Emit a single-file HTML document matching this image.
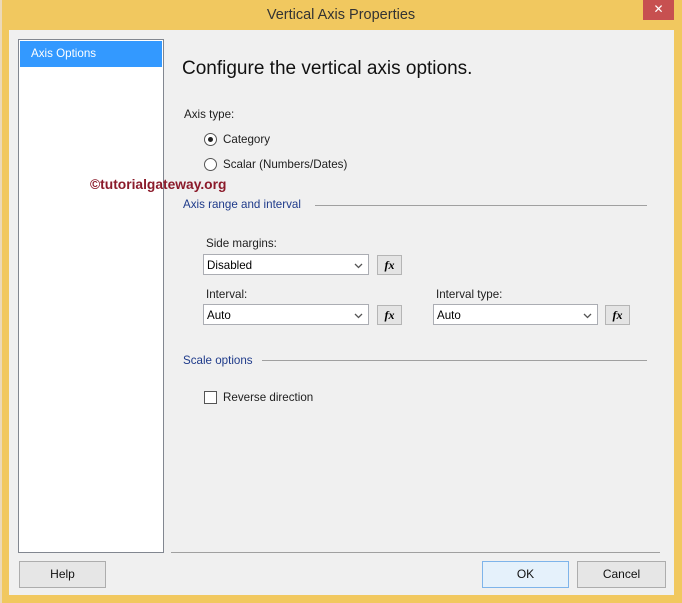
<!DOCTYPE html>
<html><head><style>
body{margin:0;width:682px;height:603px;overflow:hidden;background:#f1c85f;font-family:"Liberation Sans",sans-serif;position:relative}
.a{position:absolute}
.t{font-size:11.6px;color:#1e1e1e;white-space:nowrap}
.combo{position:absolute;height:21px;background:#fff;border:1px solid #abadb3;box-sizing:border-box;font-size:11.6px;line-height:21px;padding-left:3px;color:#000}
.combo svg{position:absolute;right:5px;top:8px}
.fx{position:absolute;width:25px;height:20px;background:#e4e4e4;border:1px solid #b5b5b5;box-sizing:border-box;font:italic bold 12px "Liberation Serif",serif;text-align:center;line-height:18px}
.btn{position:absolute;height:27px;background:#e6e6e6;border:1px solid #adadad;box-sizing:border-box;font-size:12px;text-align:center;line-height:25px;color:#111}
.rad{position:absolute;width:11px;height:11px;border:1px solid #555;border-radius:50%;background:#fff}
.hl{position:absolute;height:1px;background:#a0a0a0}
</style></head><body>
<div class="a" style="left:0;top:0;width:2px;height:603px;background:#ecd9b8"></div>
<div class="a t" style="left:0;right:0;top:7px;text-align:center;font-size:14.5px;color:#333">Vertical Axis Properties</div>
<div class="a" style="left:643px;top:0;width:31px;height:20px;background:#c75050;color:#fff;font-size:12px;text-align:center;line-height:19px">✕</div>
<div class="a" style="left:9px;top:30px;width:665px;height:565px;background:#f0f0f0"></div>
<div class="a" style="left:18px;top:39px;width:144px;height:512px;background:#fff;border:1px solid #828790"></div>
<div class="a" style="left:20px;top:41px;width:142px;height:26px;background:#3399ff"></div>
<div class="a t" style="left:31px;top:47px;color:#fff">Axis Options</div>
<div class="a t" style="left:182px;top:58px;font-size:19px;color:#111">Configure the vertical axis options.</div>
<div class="a t" style="left:184px;top:108px">Axis type:</div>
<div class="rad" style="left:204px;top:133px"><div class="a" style="left:3px;top:3px;width:5px;height:5px;border-radius:50%;background:#222"></div></div>
<div class="a t" style="left:223px;top:133px">Category</div>
<div class="rad" style="left:204px;top:158px"></div>
<div class="a t" style="left:223px;top:158px">Scalar (Numbers/Dates)</div>
<div class="a t" style="left:90px;top:177px;font-weight:bold;font-size:13.8px;color:#8b1a2a">©tutorialgateway.org</div>
<div class="a t" style="left:183px;top:198px;color:#1e3a8a">Axis range and interval</div>
<div class="hl" style="left:315px;top:205px;width:332px"></div>
<div class="a t" style="left:206px;top:237px">Side margins:</div>
<div class="combo" style="left:203px;top:254px;width:166px">Disabled<svg width="9" height="6"><path d="M1 1L4.5 4.5 8 1" stroke="#555" fill="none" stroke-width="1.3"/></svg></div>
<div class="fx" style="left:377px;top:255px">fx</div>
<div class="a t" style="left:206px;top:288px">Interval:</div>
<div class="combo" style="left:203px;top:304px;width:166px">Auto<svg width="9" height="6"><path d="M1 1L4.5 4.5 8 1" stroke="#555" fill="none" stroke-width="1.3"/></svg></div>
<div class="fx" style="left:377px;top:305px">fx</div>
<div class="a t" style="left:436px;top:288px">Interval type:</div>
<div class="combo" style="left:433px;top:304px;width:165px">Auto<svg width="9" height="6"><path d="M1 1L4.5 4.5 8 1" stroke="#555" fill="none" stroke-width="1.3"/></svg></div>
<div class="fx" style="left:605px;top:305px">fx</div>
<div class="a t" style="left:183px;top:354px;color:#1e3a8a">Scale options</div>
<div class="hl" style="left:262px;top:360px;width:385px"></div>
<div class="a" style="left:204px;top:391px;width:11px;height:11px;border:1px solid #555;background:#fff"></div>
<div class="a t" style="left:223px;top:391px">Reverse direction</div>
<div class="hl" style="left:171px;top:552px;width:489px"></div>
<div class="btn" style="left:19px;top:561px;width:87px">Help</div>
<div class="btn" style="left:482px;top:561px;width:87px;border-color:#7eb4ea;background:#e5f1fb">OK</div>
<div class="btn" style="left:577px;top:561px;width:89px">Cancel</div>
</body></html>
